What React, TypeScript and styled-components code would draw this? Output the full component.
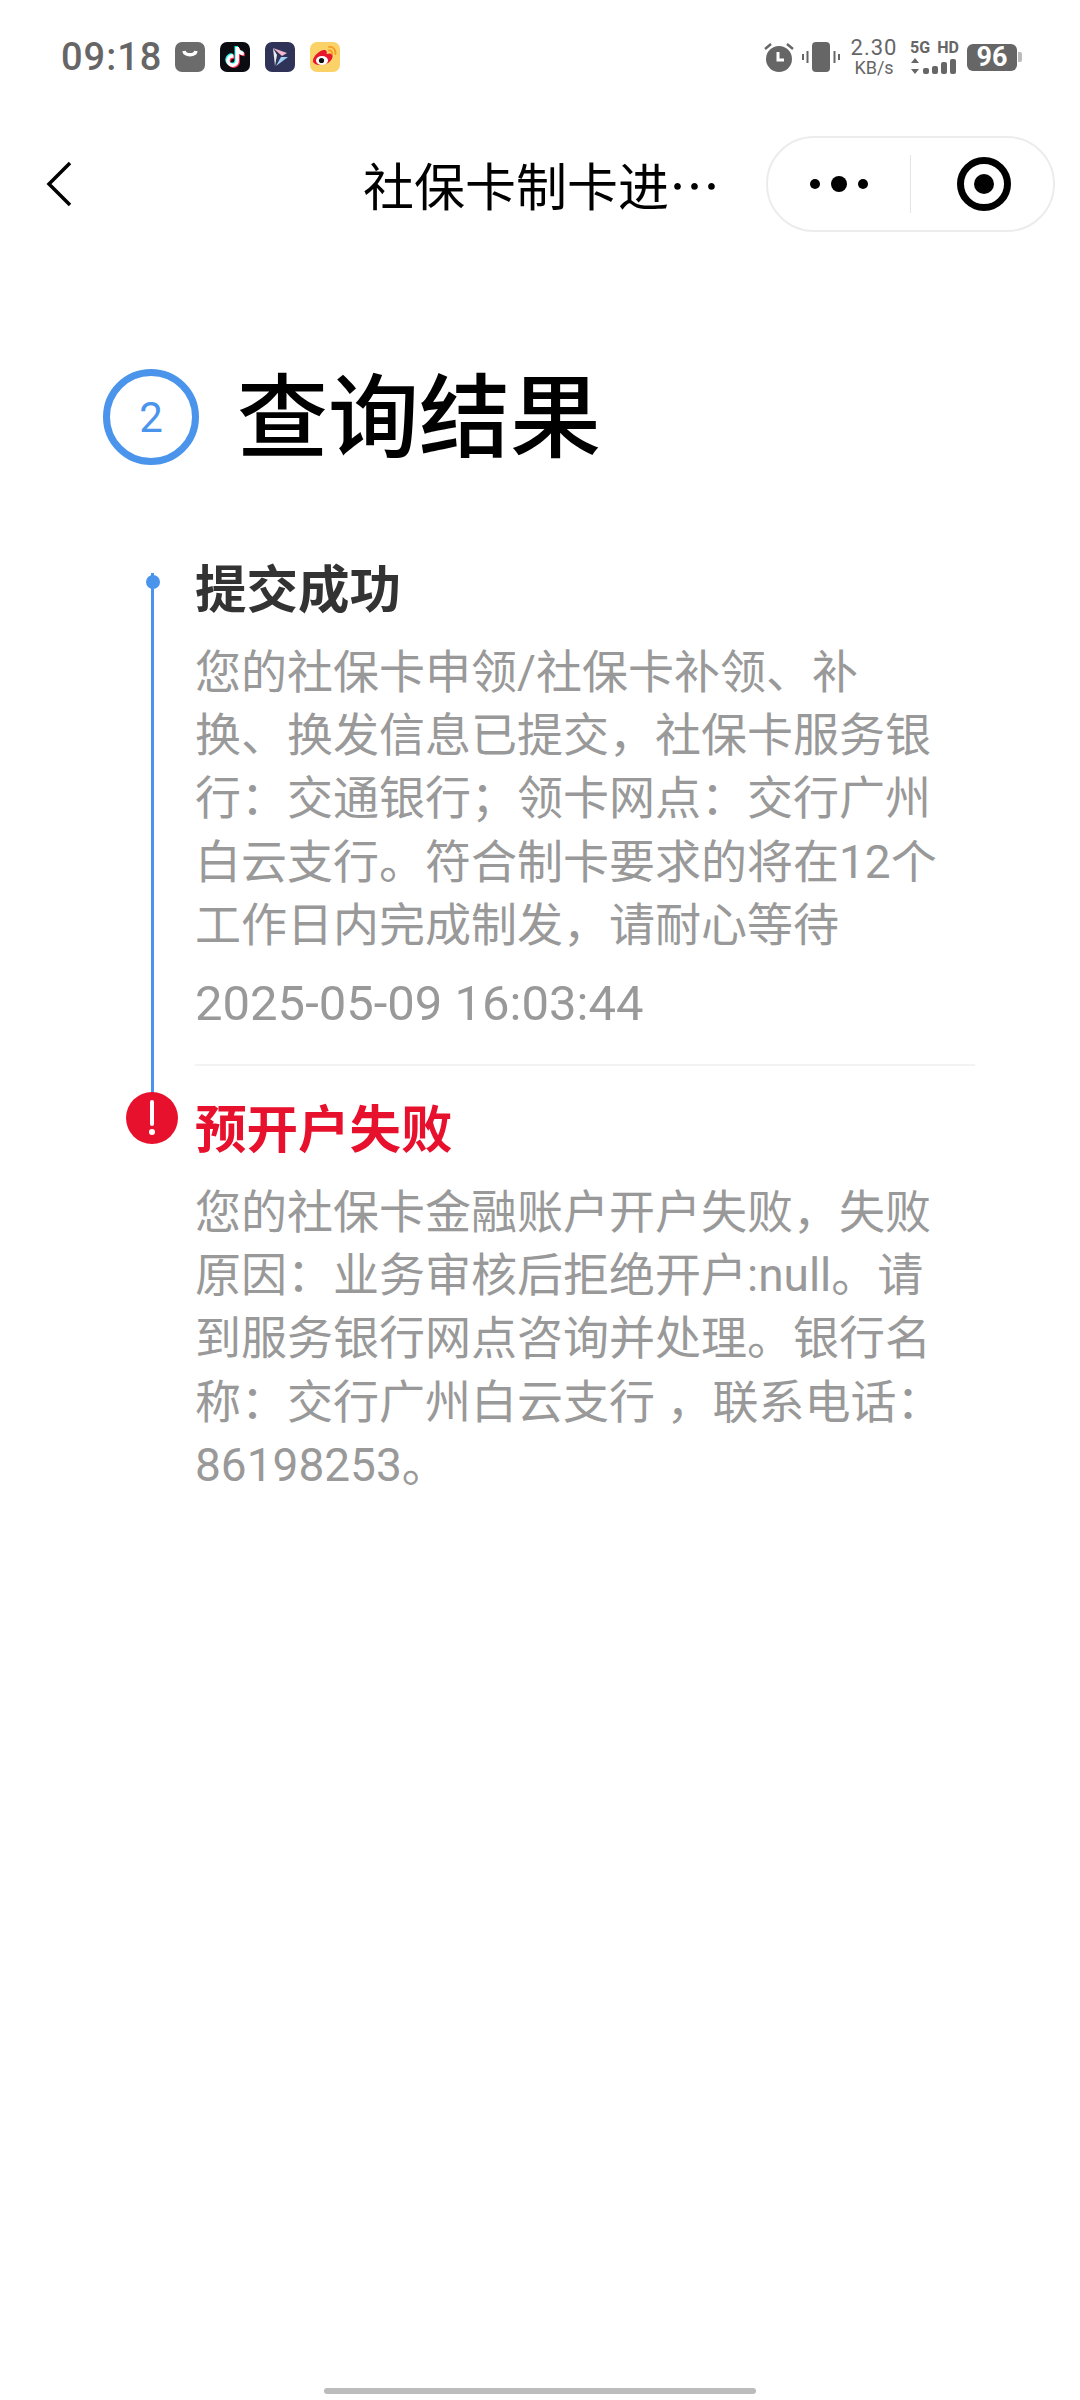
import React from "react"
import styled, { createGlobalStyle } from "styled-components"
import { FaTiktok } from "react-icons/fa"

const CJK = `"Noto Sans CJK SC", "Noto Sans", sans-serif`
const LATIN = `Roboto, "Noto Sans CJK SC", sans-serif`

const Global = createGlobalStyle`
  html, body {
    margin: 0;
    padding: 0;
    background: #fff;
  }
  * {
    box-sizing: border-box;
  }
`

const Page = styled.div`
  width: 1080px;
  height: 2400px;
  display: flex;
  flex-direction: column;
  background: #fff;
  font-family: ${CJK};
  overflow: hidden;
`

/* status bar */
const StatusBar = styled.div`
  height: 114px;
  padding: 0 58px 0 61px;
  display: flex;
  align-items: center;
  justify-content: space-between;
  color: #666;
`

const StatusGroup = styled.div`
  display: flex;
  align-items: center;
`

const Clock = styled.div`
  font-family: ${LATIN};
  font-size: 38px;
  font-weight: 500;
  letter-spacing: 1px;
  width: 114px;
`

const AppIcons = styled.div`
  display: flex;
  gap: 15px;
`

const AppIcon = styled.div<{ $bg: string }>`
  width: 30px;
  height: 30px;
  border-radius: 7px;
  background: ${(p) => p.$bg};
  display: flex;
  align-items: center;
  justify-content: center;
  overflow: hidden;
`

const TikTokLayer = styled.span<{ $color: string; $dx: number }>`
  position: absolute;
  display: flex;
  color: ${(p) => p.$color};
  transform: translate(${(p) => p.$dx}px, ${(p) => p.$dx}px);
`

const TikTokMark = styled.div`
  position: relative;
  width: 20px;
  height: 20px;
`

const Speed = styled.div`
  width: 48px;
  margin: 0 12px 0 10px;
  font-family: ${LATIN};
  text-align: center;
`

const SpeedValue = styled.div`
  font-size: 22px;
  line-height: 21px;
  letter-spacing: 1px;
`

const SpeedUnit = styled.div`
  font-size: 18px;
  line-height: 20px;
`

const Network = styled.div`
  width: 49px;
  margin-right: 8px;
  display: flex;
  flex-direction: column;
  gap: 3px;
`

const NetworkLabel = styled.div`
  font-family: ${LATIN};
  font-size: 16px;
  font-weight: 700;
  line-height: 15px;
  white-space: nowrap;
  display: flex;
  justify-content: space-between;
`

const Battery = styled.div`
  display: flex;
  align-items: center;
`

const BatteryBody = styled.div`
  width: 50px;
  height: 27px;
  border-radius: 6px;
  background: #666;
  color: #fff;
  font-family: ${LATIN};
  font-size: 27px;
  font-weight: 700;
  line-height: 27px;
  text-align: center;
`

const BatteryCap = styled.div`
  width: 4px;
  height: 10px;
  margin-left: 1px;
  border-radius: 0 2px 2px 0;
  background: #bbb;
`

const IconGap = styled.span`
  width: 7px;
`

/* navigation bar */
const NavBar = styled.div`
  position: relative;
  height: 96px;
  margin-top: 22px;
  padding: 0 25px 0 46px;
  display: flex;
  align-items: center;
  justify-content: space-between;
`

const NavTitle = styled.div`
  position: absolute;
  left: 363px;
  top: 0;
  font-size: 51px;
  line-height: 96px;
  color: #000;
  white-space: nowrap;
`

const Capsule = styled.div`
  width: 289px;
  height: 96px;
  border: 2px solid #ececec;
  border-radius: 48px;
  display: flex;
  align-items: center;
`

const CapsuleCell = styled.div<{ $shift: number }>`
  flex: 0 0 142px;
  padding-left: ${(p) => p.$shift}px;
  display: flex;
  align-items: center;
  justify-content: center;
`

const CapsuleDivider = styled.div`
  width: 1px;
  height: 58px;
  background: #e4e4e4;
`

/* step heading */
const StepHeader = styled.div`
  margin-top: 137px;
  padding-left: 103px;
  display: flex;
  align-items: center;
  gap: 38px;
`

const StepBadge = styled.div`
  width: 96px;
  height: 96px;
  border: 7px solid #4a94ec;
  border-radius: 50%;
  color: #4a94ec;
  font-family: ${LATIN};
  font-size: 42px;
  display: flex;
  align-items: center;
  justify-content: center;
`

const StepTitle = styled.h1`
  margin: 0;
  padding-bottom: 14px;
  font-size: 91px;
  font-weight: 500;
  line-height: 82px;
  color: #000;
`

/* timeline */
const Timeline = styled.div`
  margin-top: 86px;
  padding: 0 105px 0 195px;
`

const Entry = styled.div<{ $divided?: boolean }>`
  position: relative;
  ${(p) => p.$divided && "border-bottom: 2px solid #f3f3f3;"}
  ${(p) => p.$divided && "padding-bottom: 29px;"}
  ${(p) => !p.$divided && "padding-top: 25px;"}
`

const Rail = styled.div`
  position: absolute;
  left: -44px;
  top: 22px;
  width: 3px;
  height: 541px;
  background: #4a94ec;
`

const Dot = styled.div`
  position: absolute;
  left: -49px;
  top: 24px;
  width: 14px;
  height: 14px;
  border-radius: 50%;
  background: #4a94ec;
`

const ErrorMark = styled.svg`
  position: absolute;
  left: -69px;
  top: 26px;
  width: 52px;
  height: 52px;
`

const EntryTitle = styled.div<{ $color: string }>`
  font-size: 51.500px;
  font-weight: 700;
  line-height: 70px;
  color: ${(p) => p.$color};
`

const EntryBody = styled.div`
  margin-top: 20px;
  font-size: 46px;
  line-height: 63.2px;
  color: #999;
  font-family: ${LATIN};
  white-space: nowrap;
`

const EntryTime = styled.div`
  margin-top: 15px;
  font-family: ${LATIN};
  font-size: 49px;
  line-height: 63px;
  color: #999;
  white-space: nowrap;
`

const HomeBar = styled.div`
  width: 432px;
  height: 6px;
  margin: auto auto 6px;
  border-radius: 3px;
  background: #bcbcbc;
`

const WeiboIcon = () => (
  <svg width="30" height="30" viewBox="0 0 30 30">
    <path d="M3 19c0-5 7-11 11-11 3 0 3 2 2.600 4 3-1 6-1 6 2 0 5-6 9-12 9-4 0-7.600-1.500-7.600-4z" fill="#e6162d" />
    <ellipse cx="12" cy="18.500" rx="6" ry="4.500" fill="#fff" />
    <circle cx="11.500" cy="18.500" r="2.600" fill="#111" />
    <path d="M19 5c4-.5 7 2.500 6.500 7M19 8.500c2-.3 3.500 1.200 3.200 3.500" fill="none" stroke="#f59a23" strokeWidth="1.800" strokeLinecap="round" />
  </svg>
)

const AlarmIcon = () => (
  <svg width="32" height="30" viewBox="0 0 32 30">
    <circle cx="16" cy="17" r="13" fill="#666" />
    <path d="M15 10v8h6" fill="none" stroke="#fff" strokeWidth="3" />
    <path d="M2 7l6-5M30 7l-6-5" stroke="#666" strokeWidth="2.400" />
  </svg>
)

const VibrateIcon = () => (
  <svg width="38" height="32" viewBox="0 0 38 32">
    <rect x="10" y="1" width="18" height="30" rx="4" fill="#666" />
    <path d="M5.500 10v12M1 13v6M32.500 10v12M37 13v6" stroke="#666" strokeWidth="2" />
  </svg>
)

const SignalIcon = () => (
  <svg width="49" height="16" viewBox="0 0 49 16">
    <path d="M5 0l4 5H1zM5 16l-4-5h8z" fill="#666" />
    <rect x="13" y="10" width="6" height="6" rx="2" fill="#666" />
    <rect x="22" y="8" width="6" height="8" rx="2" fill="#666" />
    <rect x="31" y="4" width="6" height="12" rx="2" fill="#666" />
    <rect x="40" y="1" width="6" height="15" rx="2" fill="#666" />
  </svg>
)

export default function App() {
  return (
    <Page>
      <Global />
      <StatusBar>
        <StatusGroup>
          <Clock>09:18</Clock>
          <AppIcons>
            <AppIcon $bg="#6b6b6b">
              <svg width="30" height="30" viewBox="0 0 30 30">
                <path d="M9 9c1 5 11 5 12 0" fill="none" stroke="#fff" strokeWidth="3.500" />
              </svg>
            </AppIcon>
            <AppIcon $bg="#0b0b12">
              <TikTokMark>
                <TikTokLayer $color="#25f4ee" $dx={-1}><FaTiktok size={20} /></TikTokLayer>
                <TikTokLayer $color="#fe2c55" $dx={1}><FaTiktok size={20} /></TikTokLayer>
                <TikTokLayer $color="#fff" $dx={0}><FaTiktok size={20} /></TikTokLayer>
              </TikTokMark>
            </AppIcon>
            <AppIcon $bg="#2f3358">
              <svg width="30" height="30" viewBox="0 0 30 30">
                <path d="M8 6l14 5-5 3z" fill="#f3b9cf" />
                <path d="M8 6l4 7-2 11z" fill="#fff" opacity="0.9" />
                <path d="M11 24l12-9-7 0z" fill="#9fd0f5" />
              </svg>
            </AppIcon>
            <AppIcon $bg="#fbd267">
              <WeiboIcon />
            </AppIcon>
          </AppIcons>
        </StatusGroup>
        <StatusGroup>
          <AlarmIcon />
          <IconGap />
          <VibrateIcon />
          <Speed>
            <SpeedValue>2.30</SpeedValue>
            <SpeedUnit>KB/s</SpeedUnit>
          </Speed>
          <Network>
            <NetworkLabel>
              <span>5G</span>
              <span>HD</span>
            </NetworkLabel>
            <SignalIcon />
          </Network>
          <Battery>
            <BatteryBody>96</BatteryBody>
            <BatteryCap />
          </Battery>
        </StatusGroup>
      </StatusBar>

      <NavBar>
        <svg width="26" height="46" viewBox="0 0 26 46">
          <path d="M24 2L3 23l21 21" fill="none" stroke="#000" strokeWidth="3.500" />
        </svg>
        <NavTitle>社保卡制卡进…</NavTitle>
        <Capsule>
          <CapsuleCell $shift={0}>
            <svg width="60" height="16" viewBox="0 0 60 16">
              <circle cx="6" cy="8" r="5" fill="#000" />
              <circle cx="30" cy="8" r="8" fill="#000" />
              <circle cx="54" cy="8" r="5" fill="#000" />
            </svg>
          </CapsuleCell>
          <CapsuleDivider />
          <CapsuleCell $shift={4}>
            <svg width="54" height="54" viewBox="0 0 54 54">
              <circle cx="27" cy="27" r="23.500" fill="none" stroke="#000" strokeWidth="7" />
              <circle cx="27" cy="27" r="10" fill="#000" />
            </svg>
          </CapsuleCell>
        </Capsule>
      </NavBar>

      <StepHeader>
        <StepBadge>2</StepBadge>
        <StepTitle>查询结果</StepTitle>
      </StepHeader>

      <Timeline>
        <Entry $divided>
          <Rail />
          <Dot />
          <EntryTitle $color="#333">提交成功</EntryTitle>
          <EntryBody>
            您的社保卡申领/社保卡补领、补<br />
            换、换发信息已提交，社保卡服务银<br />
            行：交通银行；领卡网点：交行广州<br />
            白云支行。符合制卡要求的将在12个<br />
            工作日内完成制发，请耐心等待
          </EntryBody>
          <EntryTime>2025-05-09 16:03:44</EntryTime>
        </Entry>
        <Entry>
          <ErrorMark viewBox="0 0 52 52">
            <circle cx="26" cy="26" r="26" fill="#e8112d" />
            <path d="M26 10v22" stroke="#fff" strokeWidth="4" strokeLinecap="round" />
            <circle cx="26" cy="40" r="3" fill="#fff" />
          </ErrorMark>
          <EntryTitle $color="#e8112d">预开户失败</EntryTitle>
          <EntryBody>
            您的社保卡金融账户开户失败，失败<br />
            原因：业务审核后拒绝开户:null。请<br />
            到服务银行网点咨询并处理。银行名<br />
            称：交行广州白云支行 ，联系电话：<br />
            86198253。
          </EntryBody>
        </Entry>
      </Timeline>

      <HomeBar />
    </Page>
  )
}
